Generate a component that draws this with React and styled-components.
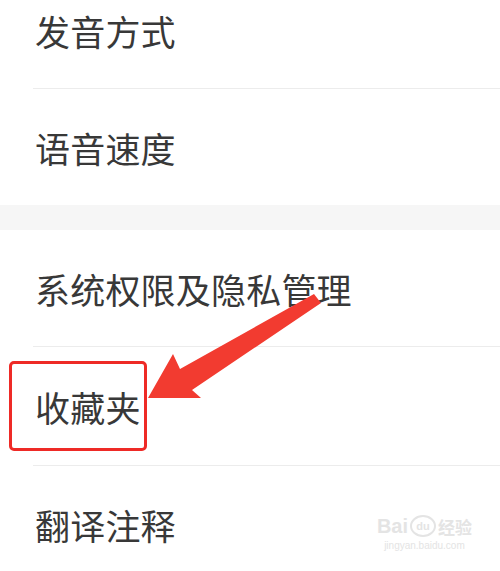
import React from "react";
import styled, { createGlobalStyle } from "styled-components";

const Global = createGlobalStyle`
  html, body { margin: 0; padding: 0; background: #fff; }
  body { font-family: "Noto Sans CJK SC", "Noto Sans", sans-serif; }
`;

const Page = styled.div`
  position: relative;
  width: 500px;
  height: 571px;
  overflow: hidden;
  background: #fff;
`;

const Group = styled.div`
  display: flex;
  flex-direction: column;
  margin-top: ${(p) => p.$offset || 0}px;
`;

const Row = styled.div`
  position: relative;
  height: ${(p) => p.$h || 116}px;
  display: flex;
  align-items: center;
  padding-left: 35px;
  box-sizing: border-box;
`;

const Label = styled.span`
  font-size: 35px;
  line-height: 1;
  color: #383838;
  letter-spacing: 0.2px;
`;

const Divider = styled.div`
  height: 1px;
  margin-left: 33px;
  background: #ececec;
`;

const Band = styled.div`
  height: 25px;
  background: #f6f6f6;
`;

const HighlightBox = styled.div`
  position: absolute;
  left: 9px;
  top: 14px;
  width: 138px;
  height: 90px;
  box-sizing: border-box;
  border: 3px solid #ee2a26;
  border-radius: 5px;
`;

const ArrowLayer = styled.svg`
  position: absolute;
  left: 0;
  top: 0;
  pointer-events: none;
`;

const Watermark = styled.div`
  position: absolute;
  right: 28px;
  bottom: 20px;
  display: flex;
  flex-direction: column;
  align-items: center;
  color: #e4e4e4;
  font-family: "Liberation Sans", sans-serif;
`;

const MarkTop = styled.div`
  display: flex;
  align-items: center;
  gap: 2px;
  font-size: 20px;
  font-weight: bold;
  line-height: 1;
`;

const MarkSub = styled.div`
  font-size: 10px;
  margin-top: 3px;
`;

const Paw = styled.span`
  display: inline-flex;
  align-items: center;
  justify-content: center;
  width: 22px;
  height: 18px;
  border: 2px solid #e4e4e4;
  border-radius: 50%;
  font-size: 11px;
`;

const MarkCn = styled.span`
  font-family: "Noto Sans CJK SC", sans-serif;
  font-size: 17px;
`;

export default function App() {
  return (
    <Page>
      <Global />
      <Group $offset={-28}>
        <Row><Label>发音方式</Label></Row>
        <Divider />
        <Row><Label>语音速度</Label></Row>
      </Group>
      <Band />
      <Group>
        <Row><Label>系统权限及隐私管理</Label></Row>
        <Divider />
        <Row $h={118}>
          <Label>收藏夹</Label>
          <HighlightBox />
        </Row>
        <Divider />
        <Row><Label>翻译注释</Label></Row>
      </Group>
      <ArrowLayer width="500" height="571" viewBox="0 0 500 571">
        <polygon
          points="148,398 173,354 180,369 314,294 321,303 192,390 201,398"
          fill="#f23b30"
        />
      </ArrowLayer>
      <Watermark>
        <MarkTop>
          <span>Bai</span>
          <Paw>du</Paw>
          <MarkCn>经验</MarkCn>
        </MarkTop>
        <MarkSub>jingyan.baidu.com</MarkSub>
      </Watermark>
    </Page>
  );
}
